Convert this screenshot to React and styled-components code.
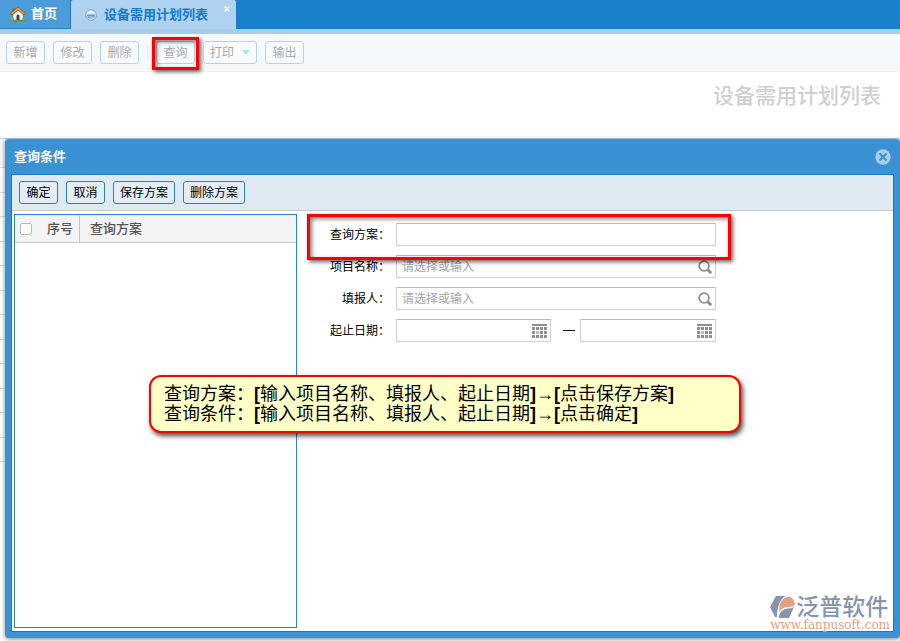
import React, { useState } from 'react'
import styled, { createGlobalStyle } from 'styled-components'

const GRID_ROWS = 12

function HomeIcon() {
  return (
    <svg width="16" height="16" viewBox="0 0 16 16" aria-hidden="true">
      <ellipse cx="8" cy="14" rx="8" ry="2" fill="#5f9a3c" />
      <path d="M3 7.5L8 3l5 4.500V14H3z" fill="#f4f1ea" stroke="#8d8373" strokeWidth="0.600" />
      <path d="M2.500 2.500h2v4h-2z" fill="#a4562b" />
      <path d="M8 0.800L0.600 7.600l1.500 1.500L8 4l5.900 5.100 1.500-1.500z" fill="#e0a04c" stroke="#7d4a1d" strokeWidth="0.800" />
      <path d="M6.500 14v-4a1.500 1.500 0 0 1 3 0v4z" fill="#4b4440" />
      <circle cx="2.500" cy="13" r="1.500" fill="#79b44e" />
      <circle cx="13.500" cy="13" r="1.500" fill="#79b44e" />
    </svg>
  )
}

function BallIcon() {
  return (
    <svg width="12" height="12" viewBox="0 0 12 12" aria-hidden="true">
      <circle cx="6" cy="6" r="5.300" fill="#d5e6f6" stroke="#8ea3bb" />
      <path d="M2 5.500h8a4 4 0 0 1-8 0z" fill="#6d9bd3" />
      <path d="M3 7.500h6a3.600 3.600 0 0 1-6 0z" fill="#a9c8ea" />
      <path d="M3 3.800a3.600 3.600 0 0 1 6 0z" fill="#fff" />
    </svg>
  )
}

function SearchIcon() {
  return (
    <svg width="14" height="14" viewBox="0 0 14 14" aria-hidden="true">
      <circle cx="6" cy="6" r="4.900" fill="none" stroke="#8c8c8c" strokeWidth="1.700" />
      <path d="M9.300 9.300l1 1" stroke="#8c8c8c" strokeWidth="1.500" />
      <path d="M10.500 10.500l1.800 1.800" stroke="#8c8c8c" strokeWidth="3" strokeLinecap="round" />
    </svg>
  )
}

function CalendarIcon() {
  const cells = [0, 1, 2, 3]
  return (
    <svg width="15" height="14" viewBox="0 0 15 14" aria-hidden="true">
      <path d="M0 0h15v2H0z" fill="#8f8f8f" />
      {[3, 7, 11].map((y) =>
        cells.map((c) => (
          <rect key={`${y}-${c}`} x={c * 4} y={y} width="3" height="3" fill={y === 7 && c === 1 ? '#bbb' : '#8f8f8f'} />
        ))
      )}
    </svg>
  )
}

function CloseIcon() {
  return (
    <svg width="16" height="16" viewBox="0 0 16 16" aria-hidden="true">
      <circle cx="8" cy="8" r="7.700" fill="#a9cdec" />
      <path d="M4.500 4.500l7 7M11.500 4.500l-7 7" stroke="#3a8fd3" strokeWidth="2" />
    </svg>
  )
}

function LogoMark() {
  return (
    <svg width="26" height="24" viewBox="0 0 26 24" aria-hidden="true">
      <path d="M6 1h9C10 5 7 12 7 22H5L0 12z" fill="#8693ae" />
      <path d="M9 17C9 8 12 3 18 1.500c4 0 6 3 7 7.500-1 2-3 3-6 3-5 0-8 2-10 5z" fill="#e3a184" />
      <path d="M9 23c0-6 4-9 9-9.500 2 0 4-.5 6-1.500L19 23z" fill="#8693ae" />
    </svg>
  )
}

function LookupField({ id, label }) {
  return (
    <FormRow>
      <Label htmlFor={id}>{label}</Label>
      <Field>
        <TextInput id={id} placeholder="请选择或输入" />
        <FieldButton type="button" aria-label="搜索"><SearchIcon /></FieldButton>
      </Field>
    </FormRow>
  )
}

function DateField({ id, label, width }) {
  return (
    <Field $width={width}>
      <TextInput id={id} aria-label={label} />
      <FieldButton type="button" aria-label="选择日期"><CalendarIcon /></FieldButton>
    </Field>
  )
}

function QueryDialog({ onClose }) {
  return (
    <Dialog role="dialog" aria-labelledby="dialog-title">
      <DialogHeader>
        <DialogTitle id="dialog-title">查询条件</DialogTitle>
        <CloseButton type="button" aria-label="关闭" onClick={onClose}><CloseIcon /></CloseButton>
      </DialogHeader>
      <DialogBody>
        <DialogBar>
          <DialogButton type="button">确定</DialogButton>
          <DialogButton type="button">取消</DialogButton>
          <DialogButton type="button">保存方案</DialogButton>
          <DialogButton type="button">删除方案</DialogButton>
        </DialogBar>
        <Columns>
          <SchemePanel>
            <SchemeTable>
              <thead>
                <tr>
                  <th><Tick type="checkbox" aria-label="全选" /></th>
                  <th>序号</th>
                  <th>查询方案</th>
                </tr>
              </thead>
            </SchemeTable>
          </SchemePanel>
          <Form>
            <FormRow>
              <Label htmlFor="scheme">查询方案：</Label>
              <Field><TextInput id="scheme" /></Field>
              <RowMark />
            </FormRow>
            <LookupField id="project" label="项目名称：" />
            <LookupField id="reporter" label="填报人：" />
            <FormRow>
              <Label htmlFor="start">起止日期：</Label>
              <DateField id="start" width="155px" />
              <Dash />
              <DateField id="end" label="截止日期" width="136px" />
            </FormRow>
          </Form>
        </Columns>
        <Brand>
          <LogoMark />
          <BrandName>泛普软件</BrandName>
          <BrandUrl href="#">www.fanpusoft.com</BrandUrl>
        </Brand>
      </DialogBody>
      <Callout>
        <p>查询方案：<b>[</b>输入项目名称、填报人、起止日期<b>]</b>→<b>[</b>点击保存方案<b>]</b></p>
        <p>查询条件：<b>[</b>输入项目名称、填报人、起止日期<b>]</b>→<b>[</b>点击确定<b>]</b></p>
      </Callout>
    </Dialog>
  )
}

function App() {
  const [open, setOpen] = useState(true)

  return (
    <Page>
      <GlobalStyle />
      <TabBar>
        <HomeTab href="#"><HomeIcon />首页</HomeTab>
        <ActiveTab>
          <TabLink href="#"><BallIcon />设备需用计划列表</TabLink>
          <TabClose type="button" aria-label="关闭标签">
            <svg width="6" height="6" viewBox="0 0 6 6"><path d="M0.500 0.500l5 5M5.500 0.500l-5 5" stroke="#fff" strokeWidth="1.300" /></svg>
          </TabClose>
        </ActiveTab>
      </TabBar>
      <Toolbar>
        <ToolButton type="button">新增</ToolButton>
        <ToolButton type="button">修改</ToolButton>
        <ToolButton type="button">删除</ToolButton>
        <Divider />
        <ToolButton type="button" onClick={() => setOpen(true)}>查询<ButtonMark /></ToolButton>
        <ToolButton type="button">打印<Caret /></ToolButton>
        <ToolButton type="button">输出</ToolButton>
      </Toolbar>
      <PageTitle>设备需用计划列表</PageTitle>
      <Workspace>
        <GridHead />
        {Array.from({ length: GRID_ROWS }, (_, i) => <GridRow key={i} />)}
        {open && <QueryDialog onClose={() => setOpen(false)} />}
      </Workspace>
    </Page>
  )
}

export default App

const GlobalStyle = createGlobalStyle`
*{
    box-sizing:border-box;
}
body{
    margin:0;
    background:#fff;
    font-family:"Liberation Sans","Noto Sans CJK SC",sans-serif;
    font-size:12px;
    line-height:16px;
    color:#000;
}
button,input{
    font:inherit;
}
p,h1,h2{
    margin:0;
}
svg{
    display:block;
    flex:none;
}
`
const Page = styled.div`
min-height:100vh;
display:flex;
flex-direction:column;
`
const TabBar = styled.nav`
display:flex;
height:34px;
background:#187fcd;
border-bottom:5px solid #a6cdec;
font-size:13px;
font-weight:700;
a{
    display:flex;
    align-items:center;
    text-decoration:none;
}
`
const HomeTab = styled.a`
gap:5px;
width:71px;
padding-left:10px;
color:#fff;
background:#4c9cda;
border-right:1px solid #1a76bd;
border-bottom:1px solid #2a83c6;
`
const ActiveTab = styled.div`
position:relative;
display:flex;
width:165px;
padding-left:14px;
background:#aed2ef;
border-radius:2px 2px 0 0;
`
const TabLink = styled.a`
gap:7px;
color:#147bcf;
`
const TabClose = styled.button`
position:absolute;
top:6px;
right:6px;
padding:0;
border:0;
background:none;
cursor:pointer;
`
const Toolbar = styled.div`
display:flex;
align-items:center;
gap:8px;
height:38px;
padding:0 6px;
background:#f5f9fc;
border-bottom:1px solid #f0f3f6;
`
const ToolButton = styled.button`
position:relative;
display:flex;
align-items:center;
justify-content:center;
gap:8px;
min-width:39px;
height:23px;
padding:0 6px;
color:#a9a9a9;
background:#f8fbfd;
border:1px solid #b7d2e8;
border-radius:3px;
white-space:nowrap;
`
const Divider = styled.span`
width:1px;
height:16px;
background:#eaeff3;
`
const Caret = styled.span`
border:4px solid transparent;
border-top:5px solid #a3e2f8;
border-bottom:0;
`
const Mark = styled.span`
position:absolute;
border:3px solid #f00;
box-shadow:2px 2px 4px rgba(0,0,0,.6), inset 2px 2px 4px rgba(0,0,0,.5);
pointer-events:none;
`
const ButtonMark = styled(Mark)`
inset:-5px -5px -7px;
`
const PageTitle = styled.h1`
height:66px;
padding:8px 19px;
text-align:right;
font-size:21px;
line-height:32px;
font-weight:500;
color:#cfcfcf;
`
const Workspace = styled.main`
position:relative;
flex:1;
min-height:480px;
border-top:1px solid #b5d6ef;
`
const GridHead = styled.div`
height:29px;
background:#f7f7f7;
border-bottom:1px solid #ddd;
`
const GridRow = styled.div`
height:25px;
border-bottom:1px solid #ddd;
&:nth-child(odd){
    height:24px;
}
`
const Dialog = styled.section`
position:absolute;
inset:0 0 3px 5px;
display:flex;
flex-direction:column;
padding:0 6px 6px;
background:#3a91d4;
border-radius:4px;
box-shadow:0 1px 4px rgba(0,0,0,.5);
`
const DialogHeader = styled.header`
display:flex;
align-items:center;
justify-content:space-between;
height:35px;
padding:0 3px;
`
const DialogTitle = styled.h2`
font-size:13px;
color:#fff;
`
const CloseButton = styled.button`
padding:0;
border:0;
background:none;
cursor:pointer;
`
const DialogBody = styled.div`
position:relative;
flex:1;
display:flex;
flex-direction:column;
background:#fff;
outline:1px solid #147ac5;
outline-offset:-1px;
padding:1px;
`
const DialogBar = styled.div`
display:flex;
align-items:center;
gap:8px;
height:36px;
padding:0 7px;
background:#dfe9f2;
border-bottom:1px solid #c3c9cf;
`
const DialogButton = styled.button`
min-width:39px;
height:23px;
padding:0 6px;
color:#000;
background:#e2edf6;
border:1px solid #2f7fb9;
border-radius:3px;
white-space:nowrap;
`
const Columns = styled.div`
flex:1;
display:flex;
padding:3px 2px;
`
const SchemePanel = styled.div`
flex:none;
width:283px;
border:1px solid #2586d1;
`
const SchemeTable = styled.table`
width:100%;
border-spacing:0;
table-layout:fixed;
font-size:13px;
color:#555;
th{
    height:28px;
    padding:0;
    font-weight:500;
    text-align:left;
    background:#f3f3f3;
    border-bottom:1px solid #c5c5c5;
}
th:nth-child(1){
    width:32px;
    padding-left:5px;
}
th:nth-child(2){
    width:33px;
    border-right:1px solid #c5c5c5;
}
th:nth-child(3){
    padding-left:10px;
}
`
const Tick = styled.input`
appearance:none;
display:block;
width:12px;
height:12px;
margin:0;
background:#fafafa;
border:1px solid #bbb;
border-radius:2px;
`
const Form = styled.form`
display:flex;
flex-direction:column;
gap:9px;
padding:9px 0 0 23px;
`
const FormRow = styled.div`
position:relative;
display:flex;
align-items:center;
width:396px;
`
const Label = styled.label`
width:70px;
margin-right:6px;
text-align:right;
white-space:nowrap;
`
const Field = styled.div`
display:flex;
align-items:center;
width:${props => props.$width || '320px'};
height:23px;
padding:0 3px 0 5px;
border:1px solid #d2d2d2;
border-top:1px solid #b9b9b9;
background:#fff;
`
const TextInput = styled.input`
flex:1;
min-width:0;
padding:0;
border:0;
outline:0;
background:none;
&::placeholder{
    color:#a5a5a5;
    opacity:1;
}
`
const FieldButton = styled.button`
padding:0;
border:0;
background:none;
`
const Dash = styled.span`
width:12px;
height:1px;
margin:0 5px 0 12px;
background:#000;
`
const RowMark = styled(Mark)`
inset:-9px -15px -14px -13px;
z-index:1;
`
const Callout = styled.div`
position:absolute;
top:236px;
left:144px;
width:592px;
padding:7px 13px;
font-size:18px;
line-height:20px;
white-space:nowrap;
background:#ffffc8;
border:2px solid #f00;
border-radius:12px;
box-shadow:2px 3px 5px rgba(0,0,0,.7);
`
const Brand = styled.div`
position:absolute;
right:4px;
bottom:1px;
display:grid;
grid-template-columns:26px auto;
`
const BrandName = styled.span`
font-size:23px;
line-height:24px;
color:#8693ae;
font-weight:500;
`
const BrandUrl = styled.a`
grid-column:1 / 3;
font-family:"DejaVu Serif",serif;
font-size:12px;
line-height:12px;
color:#e3a184;
text-decoration:none;
text-align:right;
`
